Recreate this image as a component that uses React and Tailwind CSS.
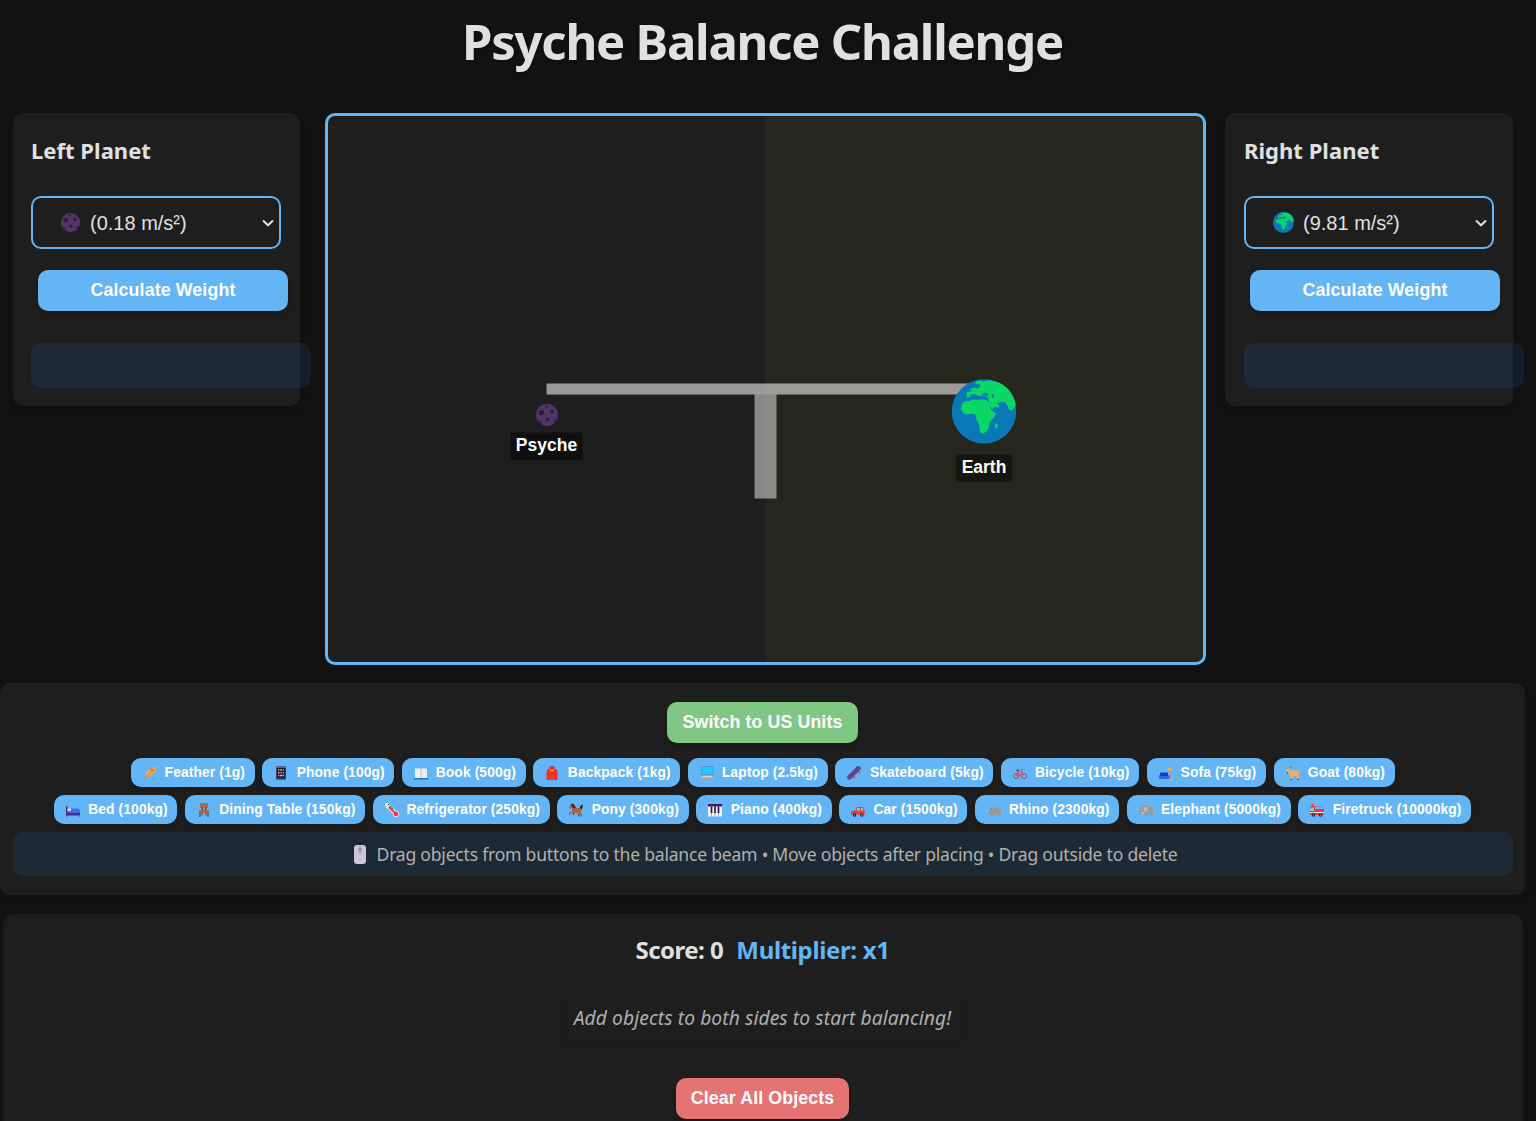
import React from "react";

const craters = (
  <>
    <circle cx="12" cy="12" r="11" fill="#533566" />
    <circle cx="6.5" cy="9.5" r="2.8" fill="#321b41" />
    <circle cx="17" cy="8.6" r="2" fill="#321b41" />
    <circle cx="12.3" cy="16.3" r="2" fill="#321b41" />
    <circle cx="11.5" cy="3.8" r="1.3" fill="#321b41" />
    <path d="M3.2 18.2c1.8-1.2 4.4.6 3.9 3.5a11 11 0 0 1-3.9-3.5zM22 16.6c-1.8-.8-4 .8-3.5 3.4a11 11 0 0 0 3.5-3.4z" fill="#321b41" />
  </>
);

const globe = (
  <>
    <circle cx="32.5" cy="32.5" r="32.3" fill="#0a78b5" />
    <g fill="#0bd766">
      <path d="M24 3C28 1.500 30 1 32 3L36 1.500C44 1.500 50 4 55 8.500C60 13 63.500 20 64.300 26C63 29.500 60 32 58 31C56 29 56.500 25 53 23C50 22 47 23.500 45.500 24.500L48 27L46.500 29L43.500 27.500L41 30L38 26L37 21.500L37 18.500L33 17L27 17L24 15.500L20 15L18.500 18L15 18.500L15.500 13L19.500 12.500L19 10L22 8.500L26 9.500L28.500 8L28 4.500L24 5.500z" />
      <path d="M20 21C23 19.500 26 21.500 30 20.500C34 20 36.500 21.500 38 25C39 30 40.500 33.500 44.500 34C44 38 39.500 40.500 38 44C38 50 34 54.500 31 54.500C28 54.500 28.500 50 27.500 46C27 43 24.500 42 24.500 37C22.500 33.500 17 36 13.500 35C8.500 32.500 8.500 26 12.500 23C14.500 21.500 17.500 23 20 21z" />
      <path d="M43.500 46l2-2 1.200 3-2 2.500-1.500-1z" />
    </g>
    <path d="M30 15.500l4-2 3 1.500v2l-6-.5zM40 15.500l1.500-1 1 4-1.500.5z" fill="#0a78b5" />
  </>
);

const icons = {
  feather: (
    <>
      <path d="M2 10.500C1.500 6 6 1.500 13.700.5c0 5-4.200 10-9.700 10.500z" fill="#eda45b" />
      <path d="M7 2.500l4 2.500" stroke="#9b6148" strokeWidth="1" />
      <path d="M.5 13.500L9 4.500" stroke="#b9794f" strokeWidth=".8" />
    </>
  ),
  phone: (
    <>
      <rect x="2" y="0" width="10" height="14" rx="1" fill="#6258a5" />
      <rect x="2.600" y="2" width="8.800" height="10.500" fill="#20163a" />
      <path d="M4 4h1.500M4 9.500h1.500M8.500 6.700H10" stroke="#36c5ed" strokeWidth="1.600" />
      <path d="M6.300 4h1.500M4 6.700h1.500M8.500 9.500H10" stroke="#ffc83d" strokeWidth="1.600" />
      <path d="M8.500 4H10M6.300 6.700h1.500" stroke="#f27848" strokeWidth="1.600" />
      <path d="M6.300 9.500h1.500" stroke="#eee" strokeWidth="1.600" />
    </>
  ),
  book: (
    <>
      <path d="M0 12h14v1.500H8L7 14l-1-.5H0z" fill="#147bb5" />
      <path d="M1 2.500h12V12H1z" fill="#f1edf7" />
      <path d="M7 3v9.500" stroke="#b5a9c2" strokeWidth=".8" />
    </>
  ),
  backpack: (
    <>
      <path d="M5 3V1.500Q7-.5 9 1.500V3" stroke="#a52051" strokeWidth="1.200" fill="none" />
      <path d="M1.500 13V6Q2 2 7 2t5.500 4v7q0 1-1 1h-9q-1 0-1-1z" fill="#f8312f" />
      <path d="M5 4.500h4" stroke="#ffb02e" strokeWidth="1.200" />
      <path d="M3 9.500Q7 5.500 11 9.500" stroke="#c91f3f" strokeWidth=".8" fill="none" />
    </>
  ),
  laptop: (
    <>
      <rect x="1" y="0" width="12.500" height="9" rx=".7" fill="#5092d8" />
      <rect x="1.800" y="1" width="10.900" height="7" fill="#26c9fc" />
      <path d="M1.500 9.500h11.500l1 4H.5z" fill="#a6a5ad" />
      <path d="M2 10.700h10.500" stroke="#d9d7e0" strokeWidth="1.200" />
    </>
  ),
  skateboard: (
    <>
      <path d="M2.500 11.500L11.500 2.500" stroke="#8e5361" strokeWidth="4.600" strokeLinecap="round" />
      <path d="M2.300 11L11.300 2" stroke="#594b93" strokeWidth="4" strokeLinecap="round" />
      <circle cx="7.300" cy="11.500" r=".9" fill="#f33" />
      <circle cx="12.500" cy="6.500" r=".9" fill="#f33" />
    </>
  ),
  bicycle: (
    <>
      <circle cx="3.200" cy="10" r="2.600" fill="#a79cc4" stroke="#6b5fa0" strokeWidth="1" />
      <circle cx="11" cy="10" r="2.600" fill="#a79cc4" stroke="#6b5fa0" strokeWidth="1" />
      <path d="M3 10L5 5l4 .3 2 4.700M5 5.500L7 10l2-4.500M3 10h4M8 3.500h2.500" stroke="#e24b78" strokeWidth="1" fill="none" />
      <path d="M3.500 4.300H6" stroke="#3d3557" strokeWidth="1.200" />
    </>
  ),
  sofa: (
    <>
      <path d="M1 6.500h8V10H1z" fill="#1345b7" />
      <path d="M0 9h10.500v4H0z" fill="#2f68ef" />
      <path d="M1.500 9.500h7.500" stroke="#0d3a9a" />
      <path d="M11.500 5v8.500h2M10.500 1.500l2-.5" stroke="#b39b86" strokeWidth="1" fill="none" />
      <path d="M8 4.500L9 2h2.500L13 4.500z" fill="#ffb02e" />
      <path d="M11 13.300h3" stroke="#ffb02e" strokeWidth="1" />
    </>
  ),
  goat: (
    <>
      <path d="M0 3.500L3 2l2 2.500h7l1.500-1L13 7l-.3 6.500h-1.500L10.500 10H6.500L6 13.500H4.400L3.500 8 2.500 6 .5 5.500z" fill="#f2ac5c" />
      <path d="M3 2Q5 2 5.500 0" stroke="#8b6a60" fill="none" />
      <path d="M4 13.500h2M11 13.500h2M1.500 6v1.500" stroke="#5b4249" />
    </>
  ),
  bed: (
    <>
      <path d="M0 3h1.500v10H0zM0 9h14v3.500H0z" fill="#46307c" />
      <path d="M1.500 7l3.500-1.500h7l2 2V10H1.500z" fill="#4568f5" />
      <path d="M1.500 5.500H5V8H1.500z" fill="#d9d5ef" />
      <path d="M0 13.300h1.500M12.500 13.300H14" stroke="#b94184" />
    </>
  ),
  chair: (
    <>
      <path d="M3 0h8v4.500H9.500V7h2.300v3H2.200V7h2.300V4.500H3z" fill="#a56953" />
      <path d="M5.200 4v3.500M8.800 4v3.500M3 9.500V14M11 9.500V14M5 10v2.500M9 10v2.500" stroke="#6d4541" strokeWidth="1.200" />
      <path d="M6.300 4.500h1.400v2.500H6.300z" fill="#64b5f6" />
    </>
  ),
  thermo: (
    <>
      <path d="M2 2l7.500 7.500" stroke="#eee" strokeWidth="4" strokeLinecap="round" />
      <circle cx="11" cy="11" r="3" fill="#f8e8ee" />
      <path d="M4 4l6 6" stroke="#f02f40" strokeWidth="2" />
      <circle cx="11" cy="11" r="2.300" fill="#f8312f" />
      <path d="M3 1l5 5" stroke="#1c1c1c" strokeWidth="1" strokeDasharray="1.500 1" />
    </>
  ),
  pony: (
    <>
      <path d="M0 3.500L2.500 1.500 5.500 5h5l2 2-.5 2 1.500 4.500H12L10.300 10.500 6.500 9.800 4.500 10l-3 .5L1 12.500 0 12 .5 9.300 3.500 8.500 3 5.500.8 5.500z" fill="#a46346" />
      <path d="M1.500 1.500L4 .5l3 4-2 1zM11 5.500Q10.500 2 14 1.500L13 6.500z" fill="#35222f" />
      <path d="M9.500 11l.5 2.500M4.500 10v2" stroke="#553647" strokeWidth="1.200" />
    </>
  ),
  piano: (
    <>
      <rect x="0" y="1" width="14" height="3" fill="#321c4d" />
      <rect x="0" y="3.500" width="14" height="10" fill="#f5f0fb" />
      <path d="M3.500 3.500V10M7 3.500V10M10.500 3.500V10" stroke="#2c173e" strokeWidth="1.700" />
      <path d="M3.500 10v3.500M7 10v3.500M10.500 10v3.500" stroke="#887799" strokeWidth=".6" />
    </>
  ),
  car: (
    <>
      <path d="M0 8.500l5-1.500L6 4h6l1.500 3.500.5 4H0z" fill="#f33638" />
      <path d="M6.500 5H9v2.500H5.700zM10 5h1.700l.8 2.500H10z" fill="#65d5ef" />
      <circle cx="3.500" cy="12" r="1.800" fill="#2e203e" />
      <circle cx="10.800" cy="12" r="1.800" fill="#2e203e" />
      <circle cx="3.500" cy="12" r=".6" fill="#ddd" />
      <circle cx="10.800" cy="12" r=".6" fill="#ddd" />
    </>
  ),
  rhino: (
    <>
      <path d="M0 6l2 1.500 2-2.500 2-.8 5 .3q3 1 3 5v4h-2L11.500 11.500H7.500L7 13.500H5L4.500 11 1.500 10.800.5 9z" fill="#999" />
      <path d="M0 5.500L1 9" stroke="#d0c9c8" strokeWidth=".8" />
      <path d="M3.500 4.500L5 6" stroke="#777" />
    </>
  ),
  elephant: (
    <>
      <path d="M2 4Q5 1 9 3q5 0 5 5v5.500h-2.500V11H8.500v2.500H6L5.500 10 3 9l-.5 3-2-.5Q-.5 7 2 4z" fill="#999" />
      <path d="M5 4.500Q9 3 8.500 7L7 9 4.500 7.500z" fill="#c0bcbd" />
      <path d="M3 9l1 2" stroke="#eee" strokeWidth="1" />
    </>
  ),
  firetruck: (
    <>
      <path d="M0 5l1-2h4v3h9v6H0z" fill="#f33638" />
      <path d="M1 4.500h3V8H0V6z" fill="#5fd5e8" />
      <path d="M2.500 1v2" stroke="#f33" strokeWidth="2" />
      <path d="M6 3.500h8" stroke="#85799b" strokeWidth="1" strokeDasharray="1.500 1" />
      <path d="M0 9.500h14" stroke="#eadcec" strokeWidth="1" />
      <circle cx="3.500" cy="12" r="1.800" fill="#2e203e" />
      <circle cx="10.500" cy="12" r="1.800" fill="#2e203e" />
      <circle cx="3.500" cy="12" r=".6" fill="#ddd" />
      <circle cx="10.500" cy="12" r=".6" fill="#ddd" />
    </>
  ),
};

const rowOne = [
  ["feather", "Feather (1g)", "w-[124px]"],
  ["phone", "Phone (100g)", "w-[132px]"],
  ["book", "Book (500g)", "w-[123.5px]"],
  ["backpack", "Backpack (1kg)", "w-[147px]"],
  ["laptop", "Laptop (2.5kg)", "w-[139.5px]"],
  ["skateboard", "Skateboard (5kg)", "w-[158px]"],
  ["bicycle", "Bicycle (10kg)", "w-[138px]"],
  ["sofa", "Sofa (75kg)", "w-[119px]"],
  ["goat", "Goat (80kg)", "w-[121px]"],
];

const rowTwo = [
  ["bed", "Bed (100kg)", "w-[123.25px]"],
  ["chair", "Dining Table (150kg)", "w-[180.25px]"],
  ["thermo", "Refrigerator (250kg)", "w-[177px]"],
  ["pony", "Pony (300kg)", "w-[131.5px]"],
  ["piano", "Piano (400kg)", "w-[135.5px]"],
  ["car", "Car (1500kg)", "w-[128.25px]"],
  ["rhino", "Rhino (2300kg)", "w-[144.25px]"],
  ["elephant", "Elephant (5000kg)", "w-[164px]"],
  ["firetruck", "Firetruck (10000kg)", "w-[173px]"],
];

function ObjectButton({ icon, label, width }) {
  return (
    <button
      className={`${width} flex h-[29px] shrink-0 items-center justify-between rounded-[10px] bg-[#64b5f6] pr-[9.5px] pl-3 text-[13.8px] leading-none font-bold tracking-[0.12px] whitespace-nowrap text-white shadow-[0_2px_4px_rgba(0,0,0,0.2)]`}
    >
      <svg viewBox="0 0 14 14" className="h-3.5 w-3.5 shrink-0">{icons[icon]}</svg>
      <span>{label}</span>
    </button>
  );
}

function PlanetPanel({ title, gravity, icon, width, selectPad, buttonMargin }) {
  return (
    <section className={`${width} h-[293px] shrink-0 rounded-[10px] bg-[#1e1e1e] pt-[22px] shadow-[0_4px_6px_rgba(0,0,0,0.1)] ${selectPad}`}>
      <h2 className="h-[31px] font-['Noto_Sans',sans-serif] text-[22px] leading-[30px] font-bold tracking-[0.03px] whitespace-nowrap">{title}</h2>
      <div className="mt-[30px] flex h-[53px] w-[250px] items-center rounded-[10px] border-2 border-[#64b5f6] pr-[5px] pl-[27px]">
        <svg viewBox={icon === "earth" ? "0 0 65 65" : "0 0 24 24"} className="h-[21px] w-[21px]">{icon === "earth" ? globe : craters}</svg>
        <span className="ml-[9px] text-[20px] leading-none whitespace-nowrap">{gravity}</span>
        <svg viewBox="0 0 12 8" className="ml-auto h-2 w-3">
          <path d="M1 1.500l5 4.800 5-4.800" fill="none" stroke="#e0e0e0" strokeWidth="2" />
        </svg>
      </div>
      <button className={`${buttonMargin} mt-[21px] block h-[41px] w-[250px] rounded-[10px] bg-[#64b5f6] pb-px text-[17.8px] font-bold tracking-[0.12px] text-white shadow-[0_2px_4px_rgba(0,0,0,0.2)]`}>
        Calculate Weight
      </button>
      <div className="mt-8 h-[45px] w-[280px] rounded-[10px] bg-[#2196f3]/10" />
    </section>
  );
}

function BalanceScene() {
  return (
    <svg viewBox="0 0 875 546" className="block h-full w-full">
      <rect x="426.500" y="273" width="22" height="109.500" fill="#888888" />
      <rect x="218.500" y="267.500" width="438" height="11" fill="#999999" />
      <rect x="437.500" width="437.500" height="546" fill="rgb(255,235,59)" fillOpacity="0.038" />
      <svg x="207" y="287" width="24" height="24" viewBox="0 0 24 24">{craters}</svg>
      <svg x="623.500" y="263" width="65" height="65" viewBox="0 0 65 65">{globe}</svg>
      <rect x="182.500" y="316.500" width="72" height="27.500" fill="#0f0f0f" />
      <rect x="628" y="338.500" width="56" height="27.500" fill="#16150f" />
      <g fontFamily="Liberation Sans" fontSize="17.500" fontWeight="700" textAnchor="middle">
        <text x="218.500" y="335" fill="#ffffff">Psyche</text>
        <text x="656" y="357" fill="#fffff5">Earth</text>
      </g>
    </svg>
  );
}

export default function App() {
  return (
    <div className="h-[1121px] w-[1536px] overflow-hidden bg-[#121212] font-['Liberation_Sans',Arial,sans-serif] text-[#e0e0e0]">
      <main className="flex w-[1525px] flex-col">
        <h1 className="h-[113px] pt-[6px] text-center font-['Noto_Sans',sans-serif] text-[49px] leading-[70px] font-bold tracking-[-1.22px] text-shadow-[1px_1px_3px_rgba(0,0,0,0.3)]">
          <span>Psyche Balance Challenge</span>
        </h1>

        <div className="flex h-[570px] items-start pl-[13px]">
          <PlanetPanel title="Left Planet" gravity="(0.18 m/s²)" icon="psyche" width="w-[287px]" selectPad="pl-[18px]" buttonMargin="ml-[7px]" />
          <div className="mr-[19px] ml-[25px] h-[552px] w-[881px] shrink-0 overflow-hidden rounded-[10px] border-3 border-[#64b5f6] bg-[#1e1e1e]">
            <BalanceScene />
          </div>
          <PlanetPanel title="Right Planet" gravity="(9.81 m/s²)" icon="earth" width="w-[288px]" selectPad="pl-[19px]" buttonMargin="ml-[6px]" />
        </div>

        <section className="flex h-[212px] flex-col items-center rounded-[10px] bg-[#1e1e1e] px-[13px] pt-[19px] shadow-[0_4px_6px_rgba(0,0,0,0.1)]">
          <button className="h-[41px] w-[191px] rounded-[10px] bg-[#81c784] pb-px text-[17.8px] font-bold tracking-[0.1px] text-white shadow-[0_2px_4px_rgba(0,0,0,0.2)]">
            Switch to US Units
          </button>
          <div className="mt-[15px] flex gap-[7.75px]">
            {rowOne.map(([icon, label, width]) => (
              <ObjectButton key={icon} icon={icon} label={label} width={width} />
            ))}
          </div>
          <div className="mt-2 flex gap-[7.5px]">
            {rowTwo.map(([icon, label, width]) => (
              <ObjectButton key={icon} icon={icon} label={label} width={width} />
            ))}
          </div>
          <div className="mt-2 flex h-11 w-[1500px] items-center justify-center rounded-[10px] bg-[#2196f3]/10 pl-[6px] font-['Noto_Sans',sans-serif] text-[17.6px] text-[#b0b0b0]">
            <svg viewBox="0 0 12 19" className="mr-[11px] h-[19px] w-3">
              <rect width="12" height="19" rx="3" fill="#cdc4d6" />
              <path d="M6 1v8" stroke="#9b8aaa" strokeWidth=".8" />
              <rect x="4.500" y="3" width="3" height="4" rx="1" fill="#9b8aaa" />
            </svg>
            <span className="tracking-[-0.24px] whitespace-nowrap">Drag objects from buttons to the balance beam • Move objects after placing • Drag outside to delete</span>
          </div>
        </section>

        <section className="mt-[19px] ml-[3px] flex h-[230px] w-[1520px] flex-col items-center rounded-[10px] bg-[#1e1e1e] pt-[19px] pr-px shadow-[0_4px_6px_rgba(0,0,0,0.1)]">
          <div className="flex h-[35px] items-center gap-[13px] pb-px font-['Noto_Sans',sans-serif] text-[24px] font-bold whitespace-nowrap">
            <span className="tracking-[-0.5px]">Score: 0</span>
            <span className="tracking-[-0.35px] text-[#64b5f6]">Multiplier: x1</span>
          </div>
          <div className="mt-[25px] flex h-[50px] w-[398px] items-center justify-center rounded-[10px] font-['Noto_Sans',sans-serif] text-[19.2px] tracking-[0.1px] whitespace-nowrap text-[#b0b0b0] italic shadow-[0_2px_4px_rgba(0,0,0,0.1)]">
            <span>Add objects to both sides to start balancing!</span>
          </div>
          <button className="mt-[35px] h-[41px] w-[173px] shrink-0 rounded-[10px] bg-[#e57373] pb-px text-[17.8px] font-bold tracking-[0.1px] text-white shadow-[0_2px_4px_rgba(0,0,0,0.2)]">
            Clear All Objects
          </button>
        </section>
      </main>
    </div>
  );
}
